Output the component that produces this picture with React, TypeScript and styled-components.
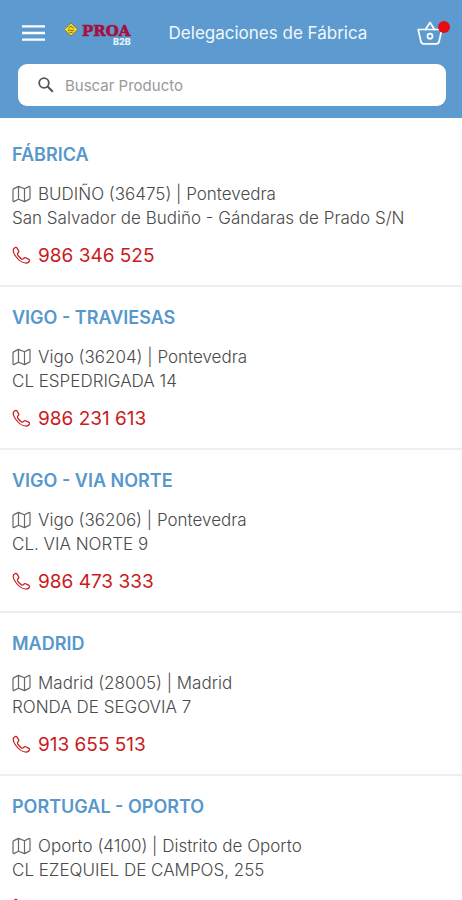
import React from "react";
import styled, { createGlobalStyle } from "styled-components";

const GlobalStyle = createGlobalStyle`
  * { box-sizing: border-box; }
  body { margin: 0; background: #fff; font-family: Inter, "Liberation Sans", sans-serif; }
`;

const Screen = styled.div`
  display: flex;
  flex-direction: column;
  height: 100vh;
  overflow: hidden;
`;

const Header = styled.header`
  flex: none;
  padding: 14px 16px 12px 18px;
  background: #5c9ad0;
`;

const TopBar = styled.div`
  display: grid;
  grid-template-columns: auto 1fr auto;
  align-items: center;
  height: 38px;
  margin-bottom: 12px;
`;

const Brand = styled.div`
  display: flex;
  align-items: center;
  gap: 16px;
`;

const IconButton = styled.button`
  display: flex;
  padding: 4px;
  border: 0;
  background: none;
  color: #fff;
`;

const BasketButton = styled(IconButton)`
  position: relative;
  padding: 0 3px 0 14px;
`;

const Badge = styled.span`
  position: absolute;
  top: 0;
  right: -4px;
  width: 12px;
  height: 12px;
  border-radius: 50%;
  background: #e60d10;
`;

const PageTitle = styled.h1`
  margin: 0;
  font-size: 17px;
  line-height: 24px;
  font-weight: 400;
  text-align: center;
  color: #f1f7fc;
`;

const SearchBox = styled.label`
  display: flex;
  align-items: center;
  gap: 11px;
  height: 42px;
  padding: 0 20px;
  border-radius: 9px;
  background: #fff;
  color: #555;
`;

const SearchInput = styled.input`
  flex: 1;
  min-width: 0;
  padding: 0;
  border: 0;
  outline: 0;
  background: none;
  font: inherit;
  font-size: 15px;
  color: #555;
  &::placeholder { color: #999; opacity: 1; }
`;

const BranchList = styled.main`
  flex: 1;
  min-height: 0;
  padding-top: 6px;
  overflow-y: auto;
  scrollbar-width: none;
`;

const Branch = styled.article`
  padding: 19px 12px 17px;
  border-bottom: 2px solid #eee;
`;

const BranchName = styled.h2`
  margin: 0 0 15px;
  font-size: 18px;
  line-height: 24px;
  font-weight: 600;
  color: #5797cc;
`;

const Address = styled.address`
  margin-bottom: 14px;
  font-size: 17px;
  line-height: 24px;
  font-weight: 300;
  font-style: normal;
  color: #4a4a4a;
`;

const Town = styled.div`
  display: flex;
  align-items: center;
  gap: 7px;
`;

const Phone = styled.a`
  display: flex;
  align-items: center;
  gap: 7px;
  width: fit-content;
  min-height: 24px;
  font-size: 19px;
  line-height: 24px;
  font-weight: 400;
  color: #c91a1d;
  text-decoration: none;
`;

const MenuIcon = () => (
  <svg width="23" height="16" viewBox="0 0 23 16" aria-hidden="true">
    <path d="M0 1.4h23M0 8h23M0 14.6h23" stroke="currentColor" strokeWidth="2.4" />
  </svg>
);

const Logo = () => (
  <svg width="68" height="26" viewBox="0 0 68 26" role="img" aria-label="Proa B2B">
    <path d="M6 3l6.8 6.5-6.8 6.5-6.8-6.5z" fill="#f5d525" stroke="#65702d" strokeWidth="0.7" overflow="visible" />
    <path d="M3.5 8.2l2.4-2 2.6 2M3 10.6c2.4-1.8 3 1.2 6-.6M4.3 12.4h3.4" fill="none" stroke="#6f6120" strokeWidth="0.9" />
    <text x="17" y="16" fontFamily="DejaVu Serif, serif" fontWeight="700" fontSize="15" fill="#a4103f" stroke="#a4103f" strokeWidth="0.6">PROA</text>
    <text x="48" y="25" fontFamily="Inter, sans-serif" fontWeight="800" fontSize="9" fill="#e4f3fa">B2B</text>
  </svg>
);

const BasketIcon = () => (
  <svg width="26" height="24" viewBox="0 0 26 24" fill="none" stroke="currentColor" strokeWidth="1.7" strokeLinejoin="round" strokeLinecap="round" aria-hidden="true">
    <path d="M1.2 8.5h23.6l-2.7 12q-.5 2.3-2.8 2.3H6.7q-2.3 0-2.8-2.3z" />
    <path d="M8.5 8.5L13 1.5l4.5 7" />
    <circle cx="13" cy="15.2" r="2.5" />
  </svg>
);

const SearchIcon = () => (
  <svg width="16" height="16" viewBox="0 0 16 16" fill="none" stroke="currentColor" strokeWidth="1.8" aria-hidden="true">
    <circle cx="6" cy="6" r="4.8" />
    <path d="M9.6 9.6l5.2 5.2" strokeWidth="2.1" />
  </svg>
);

const MapIcon = () => (
  <svg width="19" height="18" viewBox="0 0 19 18" fill="none" stroke="#686868" strokeWidth="1.2" strokeLinejoin="round" aria-hidden="true">
    <path d="M6.5 1.4L2 3.6q-1 .5-1 1.5v10.6q0 1.3 1.2.7l4.3-2.1 6 2.3 4.5-2.2q1-.5 1-1.5V2.3q0-1.3-1.2-.7l-4.3 2.1zM6.5 1.4v12.9M12.5 3.7v12.9" />
  </svg>
);

const PhoneIcon = () => (
  <svg width="19" height="20" viewBox="0 0 19 20" fill="none" stroke="currentColor" strokeWidth="1.2" strokeLinejoin="round" aria-hidden="true">
    <path d="M2 2.5C.5 4 1.4 7 3.5 10c2.6 3.7 6.3 6.7 9.8 7 2 .2 3.8-1 4.2-2.3.2-.8-.3-1.2-1-1.6l-2.8-1.4c-.9-.4-1.4-.1-2 .6-.8 1-1.4 1.1-2.4.4-1.3-.9-2.6-2.2-3.5-3.6-.6-1-.5-1.6.3-2.3.7-.6 1-1.1.6-1.9L5.1 2.1C4.4.8 3.2 1.3 2 2.5z" />
  </svg>
);

type BranchInfo = { name: string; town: string; street: string; phone?: string };

const branches: BranchInfo[] = [
  { name: "FÁBRICA", town: "BUDIÑO (36475) | Pontevedra", street: "San Salvador de Budiño - Gándaras de Prado S/N", phone: "986 346 525" },
  { name: "VIGO - TRAVIESAS", town: "Vigo (36204) | Pontevedra", street: "CL ESPEDRIGADA 14", phone: "986 231 613" },
  { name: "VIGO - VIA NORTE", town: "Vigo (36206) | Pontevedra", street: "CL. VIA NORTE 9", phone: "986 473 333" },
  { name: "MADRID", town: "Madrid (28005) | Madrid", street: "RONDA DE SEGOVIA 7", phone: "913 655 513" },
  { name: "PORTUGAL - OPORTO", town: "Oporto (4100) | Distrito de Oporto", street: "CL EZEQUIEL DE CAMPOS, 255" },
];

export default function App() {
  return (
    <Screen>
      <GlobalStyle />
      <Header>
        <TopBar>
          <Brand>
            <IconButton aria-label="Menú"><MenuIcon /></IconButton>
            <Logo />
          </Brand>
          <PageTitle>Delegaciones de Fábrica</PageTitle>
          <BasketButton aria-label="Cesta"><BasketIcon /><Badge /></BasketButton>
        </TopBar>
        <SearchBox>
          <SearchIcon />
          <SearchInput type="search" placeholder="Buscar Producto" aria-label="Buscar Producto" />
        </SearchBox>
      </Header>
      <BranchList>
        {branches.map(({ name, town, street, phone }) => (
          <Branch key={name}>
            <BranchName>{name}</BranchName>
            <Address>
              <Town><MapIcon />{town}</Town>
              <div>{street}</div>
            </Address>
            <Phone href={phone ? `tel:${phone.replace(/ /g, "")}` : "#"} aria-label={`Llamar a ${name}`}>
              <PhoneIcon />{phone}
            </Phone>
          </Branch>
        ))}
      </BranchList>
    </Screen>
  );
}
